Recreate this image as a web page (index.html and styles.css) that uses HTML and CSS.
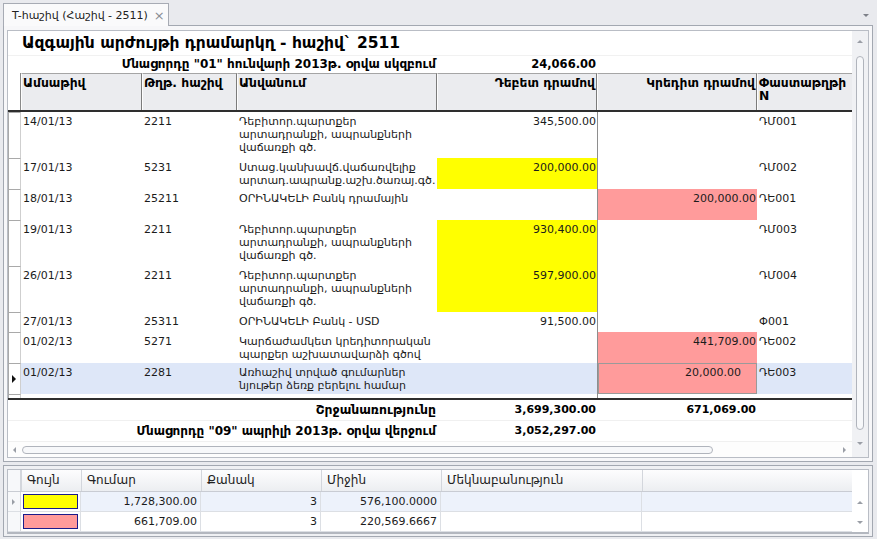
FILE: index.html
```html
<!DOCTYPE html>
<html>
<head>
<meta charset="utf-8">
<link rel="stylesheet" href="styles.css">
</head>
<body>
<div class="tabstrip">
  <div class="tab"><span class="tab-title">T-հաշիվ (Հաշիվ - 2511)</span><span class="tab-close">×</span></div>
  <span class="strip-arrow"></span>
</div>
<div class="panel">
  <div class="inner">
    <div class="report">
      <div class="title">Ազգային արժույթի դրամարկղ - հաշիվ` 2511</div>
      <div class="cols balance">
        <div class="label">Մնացորդը "01" հունվարի 2013թ. օրվա սկզբում</div>
        <div class="num">24,066.00</div>
      </div>
      <div class="cols head">
        <div class="ind"></div>
        <div class="hc">Ամսաթիվ</div>
        <div class="hc">Թղթ. հաշիվ</div>
        <div class="hc">Անվանում</div>
        <div class="hc r">Դեբետ դրամով</div>
        <div class="hc r">Կրեդիտ դրամով</div>
        <div class="hc">Փաստաթղթի<br>N</div>
      </div>
      <div class="gbody">
        <div class="cols grow h3">
          <div class="ind"></div><div class="c">14/01/13</div><div class="c">2211</div>
          <div class="c">Դեբիտոր.պարտքեր<br>արտադրանքի, ապրանքների<br>վաճառքի գծ.</div>
          <div class="c r">345,500.00</div><div class="c r cr"></div><div class="c">ԴՄ001</div>
        </div>
        <div class="cols grow h2">
          <div class="ind"></div><div class="c">17/01/13</div><div class="c">5231</div>
          <div class="c">Ստաց.կանխավճ.վաճառվելիք<br>արտադ.ապրանք.աշխ.ծառայ.գծ.</div>
          <div class="c r yellow">200,000.00</div><div class="c r cr"></div><div class="c">ԴՄ002</div>
        </div>
        <div class="cols grow h2">
          <div class="ind"></div><div class="c">18/01/13</div><div class="c">25211</div>
          <div class="c">ՕՐԻՆԱԿԵԼԻ Բանկ դրամային</div>
          <div class="c r"></div><div class="c r cr pink">200,000.00</div><div class="c">ԴԵ001</div>
        </div>
        <div class="cols grow h3">
          <div class="ind"></div><div class="c">19/01/13</div><div class="c">2211</div>
          <div class="c">Դեբիտոր.պարտքեր<br>արտադրանքի, ապրանքների<br>վաճառքի գծ.</div>
          <div class="c r yellow">930,400.00</div><div class="c r cr"></div><div class="c">ԴՄ003</div>
        </div>
        <div class="cols grow h3">
          <div class="ind"></div><div class="c">26/01/13</div><div class="c">2211</div>
          <div class="c">Դեբիտոր.պարտքեր<br>արտադրանքի, ապրանքների<br>վաճառքի գծ.</div>
          <div class="c r yellow">597,900.00</div><div class="c r cr"></div><div class="c">ԴՄ004</div>
        </div>
        <div class="cols grow h1">
          <div class="ind"></div><div class="c">27/01/13</div><div class="c">25311</div>
          <div class="c">ՕՐԻՆԱԿԵԼԻ Բանկ - USD</div>
          <div class="c r">91,500.00</div><div class="c r cr"></div><div class="c">Փ001</div>
        </div>
        <div class="cols grow h2">
          <div class="ind"></div><div class="c">01/02/13</div><div class="c">5271</div>
          <div class="c">Կարճաժամկետ կրեդիտորական<br>պարքեր աշխատավարձի գծով</div>
          <div class="c r"></div><div class="c r cr pink">441,709.00</div><div class="c">ԴԵ002</div>
        </div>
        <div class="cols grow h2 sel">
          <div class="ind"><span class="rowmark"></span></div><div class="c">01/02/13</div><div class="c">2281</div>
          <div class="c">Առհաշիվ տրված գումարներ<br>նյութեր ձեռք բերելու համար</div>
          <div class="c r"></div><div class="c r cr pink focus">20,000.00</div><div class="c">ԴԵ003</div>
        </div>
        <div class="cols grow h1">
          <div class="ind"></div><div class="c">01/02/13</div><div class="c">25211</div>
          <div class="c">ՕՐԻՆԱԿԵԼԻ Բանկ դրամային</div>
          <div class="c r">500,000.00</div><div class="c r cr"></div><div class="c">ԴՄ005</div>
        </div>
      </div>
      <div class="cols foot">
        <div class="label small">Շրջանառությունը</div>
        <div class="num">3,699,300.00</div>
        <div class="num">671,069.00</div>
      </div>
      <div class="cols foot">
        <div class="label">Մնացորդը "09" ապրիլի 2013թ. օրվա վերջում</div>
        <div class="num">3,052,297.00</div>
      </div>
    </div>
    <div class="vscroll">
      <span class="arr up"></span>
      <div class="vthumb"></div>
      <span class="arr down"></span>
    </div>
    <div class="hscroll">
      <span class="arr left"></span>
      <div class="hthumb"></div>
      <span class="arr right"></span>
    </div>
  </div>
</div>
<div class="panel2">
  <div class="inner2">
    <div class="stats">
      <div class="scols shead">
        <div class="sind"></div>
        <div class="sh">Գույն</div>
        <div class="sh">Գումար</div>
        <div class="sh">Քանակ</div>
        <div class="sh">Միջին</div>
        <div class="sh">Մեկնաբանություն</div>
        <div class="sh"></div>
      </div>
      <div class="scols srow ssel">
        <div class="sind"><span class="smark"></span></div>
        <div class="sc sw"><span class="swatch yellow"></span></div>
        <div class="sc r">1,728,300.00</div>
        <div class="sc r">3</div>
        <div class="sc r">576,100.0000</div>
        <div class="sc"></div>
        <div class="sc"></div>
      </div>
      <div class="scols srow">
        <div class="sind"></div>
        <div class="sc sw"><span class="swatch pink"></span></div>
        <div class="sc r">661,709.00</div>
        <div class="sc r">3</div>
        <div class="sc r">220,569.6667</div>
        <div class="sc"></div>
        <div class="sc"></div>
      </div>
    </div>
    <div class="svscroll">
      <span class="arr up"></span>
      <span class="arr down"></span>
    </div>
  </div>
</div>
</body>
</html>
```
FILE: styles.css
```css
html, body {
  margin: 0;
  padding: 0;
}
body {
  width: 877px;
  height: 539px;
  overflow: hidden;
  background: #e9eaee;
  font-family: "DejaVu Sans", "Noto Sans", sans-serif;
  font-size: 11px;
  color: #1b1b1b;
}

/* tab strip */
.tabstrip {
  height: 25px;
  display: flex;
  align-items: flex-end;
  padding: 0 4px 0 3px;
  box-sizing: border-box;
}
.tab {
  width: 166px;
  height: 23px;
  box-sizing: border-box;
  border: 1px solid #a7abb4;
  border-bottom: none;
  background: #fafafb;
  display: flex;
  align-items: center;
  padding-left: 8px;
  font-size: 11px;
  color: #222;
  position: relative;
  z-index: 1;
  margin-bottom: -1px;
}
.tab-title { white-space: nowrap; }
.tab-close {
  margin-left: 6px;
  color: #8a8d94;
  font-size: 13px;
}
.strip-arrow {
  margin-left: auto;
  margin-right: 4px;
  align-self: center;
  margin-top: 6px;
  width: 0;
  height: 0;
  border-left: 3px solid transparent;
  border-right: 3px solid transparent;
  border-top: 3px solid #7d8088;
}

/* main panel */
.panel {
  margin: 0 4px 0 3px;
  height: 437px;
  box-sizing: border-box;
  border: 1px solid #a3a8b1;
  padding: 4px 3px 3px 3px;
  background: #f7f7f9;
}
.inner {
  height: 100%;
  box-sizing: border-box;
  border: 1px solid #b9bdc5;
  background: #fff;
  display: grid;
  grid-template-columns: 1fr 16px;
  grid-template-rows: 1fr 15px;
}
.report {
  overflow: hidden;
  display: flex;
  flex-direction: column;
}
.cols {
  display: grid;
  grid-template-columns: 13px 121px 95px 200px 160px 160px 96px;
}
.title {
  height: 24px;
  line-height: 24px;
  padding-left: 14px;
  font-size: 15.5px;
  font-weight: bold;
  color: #000;
  white-space: nowrap;
  border-bottom: 1px solid #f1f1f1;
}
.balance {
  height: 17px;
  line-height: 16px;
  font-weight: bold;
  color: #000;
  font-size: 12px;
}
.balance .label, .foot .label {
  grid-column: 1 / 5;
  text-align: right;
  padding-right: 1px;
  white-space: nowrap;
}
.foot .label.small { font-size: 12.4px; }
.num {
  text-align: right;
  padding-right: 1px;
  font-weight: bold;
  white-space: nowrap;
  font-size: 11px;
}
.balance .num { font-size: 11.5px; }

.head {
  height: 39px;
  box-sizing: border-box;
  border-bottom: 2px solid #2e2e2e;
  font-weight: bold;
  color: #000;
  font-size: 12.3px;
}
.head .ind { background: #fff; border-right: 1px solid #8a8a8a; }
.hc {
  background: #ebecef;
  border-top: 1px solid #a5a5a5;
  border-left: 1px solid #fdfdfd;
  border-right: 1px solid #7b7b7b;
  padding: 3px 2px 0 1px;
  line-height: 13px;
  overflow: hidden;
}
.hc.r { text-align: right; padding-right: 1px; }

.gbody {
  height: 286px;
  overflow: hidden;
  border-bottom: 2px solid #2e2e2e;
  flex: none;
}
.grow { line-height: 13px; }
.grow.h1 { height: 20px; }
.grow.h2 { height: 31px; }
.grow.h3 { height: 46px; }
.grow .ind {
  border-top: 1px solid #a9a9a9;
  border-left: 1px solid #a9a9a9;
  border-right: 1px solid #cfcfcf;
  display: flex;
  align-items: center;
  padding-left: 3px;
}
.c {
  padding: 3px 1px 0 2px;
  overflow: hidden;
  white-space: nowrap;
}
.c.r { text-align: right; padding-right: 1px; }
.c.cr { border-left: 1px solid #8e8e8e; }
.yellow { background: #ffff00; }
.pink { background: #ff9b9b; }
.sel .c { background: #dee7f8; }
.sel .c.pink { background: #ff9b9b; }
.sel .c.focus { box-shadow: inset 0 0 0 1px #9a9a9a; padding-right: 16px; }
.rowmark {
  width: 0; height: 0;
  border-left: 4px solid #111;
  border-top: 4px solid transparent;
  border-bottom: 4px solid transparent;
}

.foot {
  height: 20px;
  line-height: 20px;
  font-weight: bold;
  color: #000;
  border-bottom: 1px solid #f0f0f0;
  font-size: 12px;
}

/* scrollbars */
.vscroll {
  grid-row: 1 / 3;
  grid-column: 2;
  background: #f0f1f4;
  display: flex;
  flex-direction: column;
  align-items: center;
  padding: 9px 0 6px;
  box-sizing: border-box;
}
.vthumb {
  width: 8px;
  flex: none;
  height: 374px;
  margin: 13px 0 12px;
  box-sizing: border-box;
  border: 1px solid #b0b4bc;
  border-radius: 4px;
  background: #f7f8fa;
}
.hscroll {
  grid-row: 2;
  grid-column: 1;
  background: #fdfdfd;
  display: flex;
  align-items: center;
  padding-left: 5px;
}
.hthumb {
  width: 691px;
  height: 8px;
  box-sizing: border-box;
  border: 1px solid #b0b4bc;
  border-radius: 4px;
  background: #f7f8fa;
  margin-left: 6px;
}
.hscroll .arr.right { margin-left: auto; margin-right: 6px; }
.arr { width: 0; height: 0; display: block; flex: none; }
.arr.up { border-left: 3px solid transparent; border-right: 3px solid transparent; border-bottom: 3px solid #9a9ea6; }
.arr.down { border-left: 3px solid transparent; border-right: 3px solid transparent; border-top: 3px solid #9a9ea6; }
.arr.left { border-top: 3px solid transparent; border-bottom: 3px solid transparent; border-right: 3px solid #9a9ea6; }
.arr.right { border-top: 3px solid transparent; border-bottom: 3px solid transparent; border-left: 3px solid #9a9ea6; }

/* bottom stats panel */
.panel2 {
  margin: 3px 4px 0 3px;
  height: 72px;
  box-sizing: border-box;
  border: 1px solid #a3a8b1;
  padding: 3px 3px 2px 3px;
  background: #eff0f3;
}
.inner2 {
  height: 100%;
  box-sizing: border-box;
  border: 1px solid #b9bdc5;
  border-bottom: 2px solid #b3b7bf;
  background: #fff;
  display: grid;
  grid-template-columns: 1fr 16px;
}
.stats { overflow: hidden; }
.scols {
  display: grid;
  grid-template-columns: 13px 60px 120px 120px 120px 201px 211px;
}
.shead {
  height: 22px;
  background: linear-gradient(#fdfdfe, #eceef1);
  border-bottom: 1px solid #c9ccd3;
  box-sizing: border-box;
  font-size: 12px;
}
.sh {
  border-left: 1px solid #d3d6dc;
  padding-left: 5px;
  line-height: 21px;
  color: #222;
  white-space: nowrap;
}
.sind {
  background: #f7f8fa;
  border-right: 1px solid #d3d6dc;
  display: flex;
  align-items: center;
  padding-left: 4px;
}
.srow {
  height: 20px;
  box-sizing: border-box;
  border-bottom: 1px solid #dcdfe4;
}
.sc {
  border-right: 1px solid #dcdfe4;
  line-height: 19px;
  padding: 0 3px;
  white-space: nowrap;
  color: #1b1b1b;
}
.sc.r { text-align: right; }
.ssel .sc { background: #edf2fb; }
.ssel .sc.sw { background: #fff; }
.sc.sw { padding: 2px 2px 0 2px; }
.swatch {
  display: block;
  width: 55px;
  height: 15px;
  box-sizing: border-box;
  border: 1px solid #1b1b8a;
}
.smark {
  width: 0; height: 0;
  border-left: 3px solid #9a9ea6;
  border-top: 3px solid transparent;
  border-bottom: 3px solid transparent;
}
.svscroll {
  display: flex;
  flex-direction: column;
  align-items: center;
  justify-content: space-between;
  padding: 31px 0 8px;
  background: #fff;
}
```
